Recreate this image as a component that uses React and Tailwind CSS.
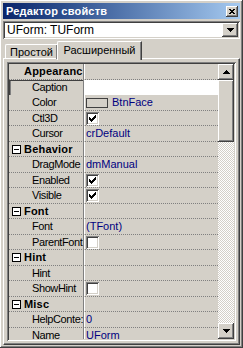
import React from "react";

const raised =
  "shadow-[inset_-1px_-1px_#404040,inset_1px_1px_#ffffff,inset_-2px_-2px_#808080,inset_2px_2px_#d4d0c8]";
const sunken =
  "shadow-[inset_1px_1px_#808080,inset_-1px_-1px_#ffffff,inset_2px_2px_#404040,inset_-2px_-2px_#d4d0c8]";

const rows = [
  { cat: "Appearanc", nobox: true },
  { name: "Caption", selected: true },
  { name: "Color", color: true, value: "BtnFace" },
  { name: "Ctl3D", check: true },
  { name: "Cursor", value: "crDefault" },
  { cat: "Behavior" },
  { name: "DragMode", value: "dmManual" },
  { name: "Enabled", check: true },
  { name: "Visible", check: true },
  { cat: "Font" },
  { name: "Font", value: "(TFont)" },
  { name: "ParentFont", check: false },
  { cat: "Hint" },
  { name: "Hint" },
  { name: "ShowHint", check: false },
  { cat: "Misc" },
  { name: "HelpConte:", value: "0" },
  { name: "Name", value: "UForm" },
];

function Checkbox({ checked }) {
  return (
    <div className={`w-[13px] h-[13px] bg-white ${sunken} flex items-center justify-center`}>
      {checked && (
        <svg width="7" height="7" viewBox="0 0 7 7" shapeRendering="crispEdges">
          <path d="M0 2h1v3H0zM1 3h1v3H1zM2 4h1v3H2zM3 3h1v3H3zM4 2h1v3H4zM5 1h1v3H5zM6 0h1v3H6z" fill="#000" />
        </svg>
      )}
    </div>
  );
}

function Arrow({ up }) {
  return (
    <svg width="7" height="4" viewBox="0 0 7 4" shapeRendering="crispEdges">
      {up ? (
        <path d="M3 0h1v1H3zM2 1h3v1H2zM1 2h5v1H1zM0 3h7v1H0z" fill="#000" />
      ) : (
        <path d="M0 0h7v1H0zM1 1h5v1H1zM2 2h3v1H2zM3 3h1v1H3z" fill="#000" />
      )}
    </svg>
  );
}

function Row({ r, i }) {
  const h = i % 2 === 0 ? "h-[16px]" : "h-[15px]";
  if (r.cat) {
    return (
      <div className={`flex ${h} border-b border-dotted border-[#808080]`}>
        <div className="w-[75px] shrink-0 flex items-center pl-[3px] gap-[3px] border-r border-[#808080] overflow-hidden whitespace-nowrap">
          {r.nobox ? (
            <span className="w-[9px] shrink-0" />
          ) : (
            <span className="w-[9px] h-[9px] shrink-0 border border-black bg-white flex items-center justify-center">
              <span className="w-[5px] h-px bg-black" />
            </span>
          )}
          <span className="font-bold text-[11px] text-black tracking-[0.2px]">{r.cat}</span>
        </div>
        <div className="flex-1 border-l border-white" />
      </div>
    );
  }
  return (
    <div className={`flex ${h} ${r.selected ? "" : "border-b border-dotted border-[#808080]"}`}>
      <div
        className={`w-[75px] shrink-0 flex items-center pl-[23px] overflow-hidden whitespace-nowrap text-[11px] tracking-[-0.4px] text-black border-r border-[#808080] ${
          r.selected ? "shadow-[inset_1px_1px_#404040,inset_2px_0_#808080]" : ""
        }`}
      >
        {r.name}
      </div>
      <div
        className={`flex-1 flex items-center pl-[1px] gap-[4px] text-[11px] text-[#000080] whitespace-nowrap overflow-hidden border-l border-white ${
          r.selected ? "bg-white" : ""
        }`}
      >
        {r.color && <span className="w-[22px] h-[10px] border border-[#404040] bg-[#d4d0c8] shrink-0" />}
        {r.check !== undefined && <Checkbox checked={r.check} />}
        {r.value && <span>{r.value}</span>}
      </div>
    </div>
  );
}

export default function App() {
  return (
    <div
      className={`w-[243px] h-[348px] bg-[#d4d0c8] p-[3px] flex flex-col overflow-hidden ${raised}`}
      style={{ fontFamily: '"Liberation Sans", Arial, sans-serif' }}
    >
      {/* title bar */}
      <div className="h-[16px] shrink-0 flex items-center justify-between bg-gradient-to-r from-[#0a246a] to-[#a6caf0] pl-[3px] pr-[2px]">
        <span className="text-white font-bold text-[11px] leading-none tracking-[0.2px]">Редактор свойств</span>
        <div className={`w-[12px] h-[11px] bg-[#d4d0c8] ${raised} flex items-center justify-center`}>
          <svg width="6" height="5" viewBox="0 0 6 5" shapeRendering="crispEdges">
            <path d="M0 0h2v1H0zM4 0h2v1H4zM1 1h2v1H1zM3 1h2v1H3zM2 2h2v1H2zM1 3h2v1H1zM3 3h2v1H3zM0 4h2v1H0zM4 4h2v1H4z" fill="#000" />
          </svg>
        </div>
      </div>

      {/* object combo */}
      <div className={`mt-[2px] h-[18px] shrink-0 bg-white ${sunken} flex items-center pl-[4px] pr-[2px]`}>
        <span className="flex-1 text-[12px] text-black">UForm: TUForm</span>
        <div className={`w-[16px] h-[14px] bg-[#d4d0c8] ${raised} flex items-center justify-center`}>
          <Arrow />
        </div>
      </div>

      {/* tabs */}
      <div className="h-[18px] mt-[1px] shrink-0 flex items-end pl-[2px] relative z-10">
        <div className="w-[53px] h-[15px] flex items-center justify-center text-[11px] text-black border-t border-l border-white border-r border-r-[#404040] shadow-[inset_-1px_0_#808080] rounded-tl-[2px] mb-[-1px]">
          Простой
        </div>
        <div className="w-[85px] h-[19px] ml-[-1px] flex items-center justify-center text-[11px] text-black bg-[#d4d0c8] border-t border-l border-white border-r border-r-[#404040] shadow-[inset_-1px_0_#808080] rounded-tl-[2px] mb-[-2px] pb-[2px]">
          Расширенный
        </div>
      </div>

      {/* tab panel */}
      <div className="flex-1 min-h-0 border-t border-l border-white border-r border-b border-r-[#404040] border-b-[#404040] shadow-[inset_-1px_-1px_#808080] p-[3px] flex">
        <div className={`flex-1 min-h-0 p-[2px] ${sunken} flex overflow-hidden`}>
          <div className="flex-1 overflow-hidden">
            {rows.map((r, i) => (
              <Row key={i} r={r} i={i} />
            ))}
          </div>
          {/* scrollbar */}
          <div className="w-[16px] flex flex-col bg-[image:repeating-conic-gradient(#ffffff_0%_25%,#d4d0c8_0%_50%)] bg-[length:2px_2px]">
            <div className={`h-[16px] shrink-0 bg-[#d4d0c8] ${raised} flex items-center justify-center`}>
              <Arrow up />
            </div>
            <div className={`h-[62px] shrink-0 bg-[#d4d0c8] ${raised}`} />
            <div className="flex-1" />
            <div className={`h-[16px] shrink-0 bg-[#d4d0c8] ${raised} flex items-center justify-center`}>
              <Arrow />
            </div>
          </div>
        </div>
      </div>
    </div>
  );
}
